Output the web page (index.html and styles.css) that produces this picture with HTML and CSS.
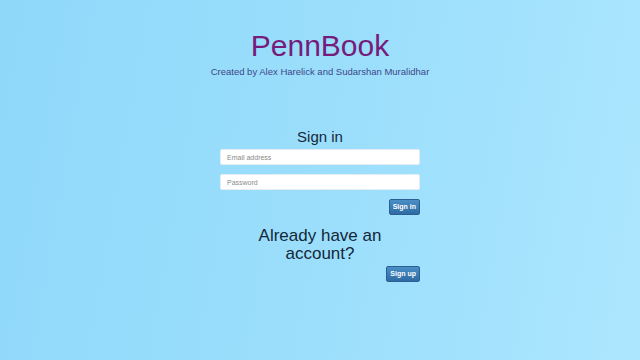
FILE: index.html
```html
<!DOCTYPE html>
<html>
<head>
<meta charset="utf-8">
<title>PennBook</title>
<link rel="stylesheet" href="styles.css">
</head>
<body>
<div class="page">
	<div class="header">
		<h1 class="logo">PennBook</h1>
		<p class="credits">Created by Alex Harelick and Sudarshan Muralidhar</p>
	</div>
	<form class="login">
		<h2 class="title">Sign in</h2>
		<input class="field" type="text" placeholder="Email address">
		<input class="field" type="password" placeholder="Password">
		<div class="actions"><button class="btn" type="button">Sign in</button></div>
		<h2 class="question">Already have an account?</h2>
		<div class="actions"><button class="btn" type="button">Sign up</button></div>
	</form>
</div>
</body>
</html>
```

FILE: styles.css
```css
html, body{margin:0; padding:0;}
body{font-family:"Liberation Sans", Arial, sans-serif; background:linear-gradient(100deg, #8fd8fa 0%, #9cdffc 55%, #ace6fe 100%); height:360px; overflow:hidden;}
.page{display:flex; flex-direction:column; align-items:center; padding-top:28px;}
.header{text-align:center;}
.logo{margin:0; font-size:30px; font-weight:normal; color:#761c7a; line-height:36px;}
.credits{margin:2px 0 0; font-size:9.5px; color:#3d4788; line-height:12px;}
.login{width:200px; margin-top:49px; display:flex; flex-direction:column;}
.title{margin:1px 0 3px; font-size:15px; font-weight:normal; text-align:center; color:#14283a; line-height:18px;}
.field{box-sizing:border-box; width:200px; height:16px; margin:0 0 9px; padding:0 6px; border:1px solid #e4edf3; border-radius:2px; background:#fff; font-family:"Liberation Sans", Arial, sans-serif; font-size:7px; color:#555; outline:none;}
.field::placeholder{color:#8a8a8a;}
.actions{display:flex; justify-content:flex-end;}
.btn{height:16px; padding:0 3px; border:1px solid #2b5f91; border-radius:2px; background:linear-gradient(#4a8fc6, #2f6ba3); color:#fff; font-family:"Liberation Sans", Arial, sans-serif; font-size:7px; font-weight:bold; line-height:14px;}
.question{margin:12px auto 3px; width:140px; font-size:17px; font-weight:normal; text-align:center; color:#14283a; line-height:18px;}
```
